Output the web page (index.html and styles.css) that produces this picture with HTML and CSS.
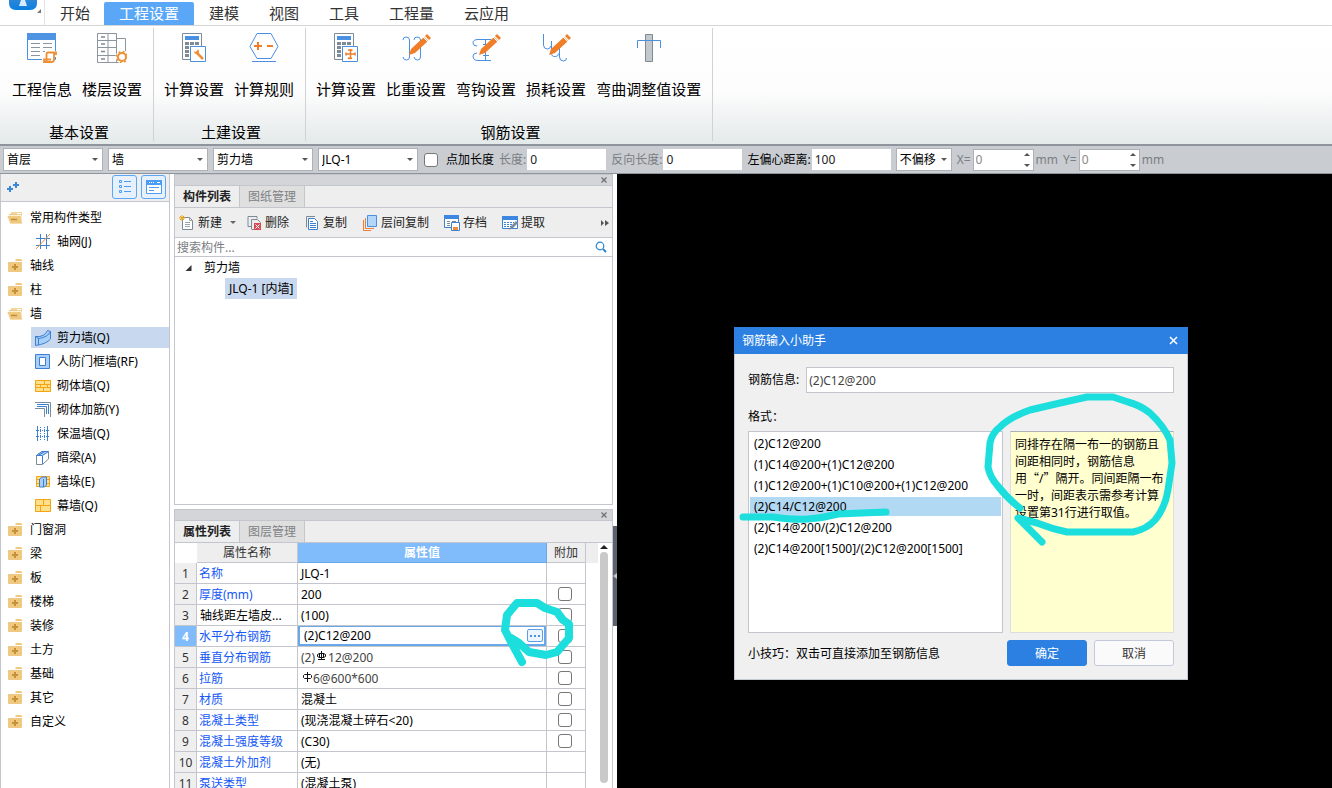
FILE: index.html
```html
<!DOCTYPE html>
<html lang="zh-CN">
<head>
<meta charset="utf-8">
<title>工程设置</title>
<link rel="stylesheet" href="styles.css">
</head>
<body>
<svg class="defs" aria-hidden="true">
  <symbol id="closed" viewBox="0 0 16 14"><path d="M1 3h14v9a1 1 0 0 1-1 1H2a1 1 0 0 1-1-1z" fill="#efc980"/><path d="M9 0h5l1 1v1H8z" fill="#efc980"/><path d="M8 5v6M5 8h6" stroke="#c4913a" stroke-width="2"/></symbol>
  <symbol id="open" viewBox="0 0 16 14"><path d="M4 1h11v11H4z" fill="#f3d59b"/><path d="M2 3h8v3H2z" fill="#efc980"/><path d="M10 2.500h4" stroke="#fff"/><path d="M0 4.500h14l1.500 8.500H3z" fill="#efc980" stroke="#fff" stroke-width=".7"/><path d="M4 8.500h6" stroke="#bd8a36" stroke-width="1.500"/></symbol>
  <symbol id="calc" viewBox="0 0 30 30"><path d="M3.500.5h19v26h-19z" fill="#fff" stroke="#7d8b96"/><path d="M6 3h14v4H6z" fill="#4a90e2"/><path d="M6 9h4v3H6zm5 0h4v3h-4zm5 0h4v3h-4zM6 13h4v3H6zm5 0h4v3h-4zM6 17h4v3H6zm0 4h4v3H6z" fill="#7d8b96"/><path d="M11.500 13.500h15v15h-15z" fill="#fff" stroke="#4a90e2"/></symbol>
  <symbol id="pencil" viewBox="0 0 30 30"><path d="m8 22 2-6L23 4l4 4L14 20z" fill="#f07d28"/><path d="m24 3 2-2 4 4-2 2z" fill="#f07d28"/><path d="m22 4 5 5" stroke="#fff"/></symbol>
</svg>

<div class="app">
  <header class="tabs">
    <div class="brand"><svg width="28" height="11" viewBox="0 0 28 11"><defs><linearGradient id="lg" y2="1" x2="0"><stop stop-color="#2d86d8"/><stop offset="1" stop-color="#087fdf"/></linearGradient></defs><path d="M0 0h28v3q0 7-7 7H7Q0 10 0 3z" fill="url(#lg)"/><path d="M12 0h4l2 6h-8z" fill="#d8ecff"/></svg><i class="corner"></i></div>
    <nav class="tablist">
      <button>开始</button><button class="on">工程设置</button><button>建模</button><button>视图</button><button>工具</button><button>工程量</button><button>云应用</button>
    </nav>
  </header>

  <section class="ribbon">
    <div class="group first">
      <div class="tools">
        <button><svg width="30" height="30" viewBox="0 0 30 30"><path d="M.5.5h28v26H.5z" fill="#fff" stroke="#4a90e2"/><path d="M0 0h29v7H0z" fill="#4f94e3"/><path d="M4 10.500h9m3 0h9M4 14.500h9m3 0h9M4 18.500h9m3 0h3M4 22.500h9" stroke="#8b959d"/><path d="M15 30v-5h3v-7h12v6h-3v6z" fill="#fff"/><path d="M19.500 28V21q0-1.500 1.500-1.500h8v2.500M27 20v6.500q0 2.500-2.500 2.500H17v-2.500h7" fill="none" stroke="#ee8f35" stroke-width="1.800"/></svg>工程信息</button>
        <button><svg width="30" height="30" viewBox="0 0 30 30"><path d="M.5.5h19v29H.5zM.5 7.500h19M.5 14.500h19M.5 22.500h19M11 .5v29M20 5.500h8.500V18M22 29.500h-4" fill="none" stroke="#8b959d"/><path d="M4 4h4M4 11h4M4 18.500h4M4 26h4" stroke="#7d8b96" stroke-width="1.500"/><circle cx="25" cy="24" r="6.500" fill="#fff"/><circle cx="25" cy="24" r="4" fill="none" stroke="#ee8f35" stroke-width="2"/><circle cx="25" cy="24" r="5.500" fill="none" stroke="#ee8f35" stroke-width="1.500" stroke-dasharray="2 2.320"/></svg>楼层设置</button>
      </div>
      <h2>基本设置</h2>
    </div>
    <div class="group">
      <div class="tools">
        <button><svg width="30" height="30" viewBox="0 0 30 30"><use href="#calc"/><path d="m17 19 7 7" stroke="#ee8f35" stroke-width="2.500"/><path d="M15 17.500q0 4 4 3.500 2-2 0-5l-1 2-2 1z" fill="#ee8f35"/></svg>计算设置</button>
        <button><svg width="30" height="30" viewBox="0 0 30 30"><path d="M8 .5h14l7 13-7 12H8l-7-12z" fill="#fff" stroke="#4a90e2"/><path d="M3 28.500h24" stroke="#4a90e2"/><path d="M5 13h8M9 9v8M18 13h6" stroke="#f07d28" stroke-width="2"/></svg>计算规则</button>
      </div>
      <h2>土建设置</h2>
    </div>
    <div class="group">
      <div class="tools">
        <button><svg width="30" height="30" viewBox="0 0 30 30"><use href="#calc"/><path d="M19.500 16v9M15 21h9M15 19.500v3M24 19.500v3M17 17.500q2-1.500 4.500 0M17 25q2 1 4 0" fill="none" stroke="#f07d28" stroke-width="1.500"/></svg>计算设置</button>
        <button><svg width="30" height="30" viewBox="0 0 30 30"><path d="M2 7q0-3 3-3 3.500 0 3.500 3v17q0 3-3 3T2 24M13 7q0-3 3-3 3.500 0 3.500 3v17q0 3-3 3T13 24" fill="none" stroke="#4a90e2"/><use href="#pencil"/></svg>比重设置</button>
        <button><svg width="30" height="30" viewBox="0 0 30 30"><path d="M6 13q-4 0-4-3 0-3.500 5-3.500h13M6 20q-4 0-4 3 0 4.500 5 4.500h13M14.500 7v20M12 11.500h6M12 22.500h6" fill="none" stroke="#4a90e2"/><use href="#pencil"/></svg>弯钩设置</button>
        <button><svg width="30" height="30" viewBox="0 0 30 30"><path d="M2.500 1v11q0 4 4 4 3 0 3-3M10.500 8v12q0 4 4 3.500 3 0 3-3M18.500 15v9q0 4 4 4 3 0 3-3" fill="none" stroke="#4a90e2"/><use href="#pencil"/></svg>损耗设置</button>
        <button><svg width="30" height="30" viewBox="0 0 30 30"><path d="M11.500 1.500h7v27h-7z" fill="#c3c8cc" stroke="#7d8b96"/><path d="M3.500 15V7.500h23V15" fill="none" stroke="#4a90e2"/></svg>弯曲调整值设置</button>
      </div>
      <h2>钢筋设置</h2>
    </div>
  </section>

  <section class="options">
    <span class="pick"><select aria-label="楼层"><option>首层</option></select></span>
    <span class="pick"><select aria-label="构件类别"><option>墙</option></select></span>
    <span class="pick"><select aria-label="构件类型"><option>剪力墙</option></select></span>
    <span class="pick"><select aria-label="构件"><option>JLQ-1</option></select></span>
    <label class="tick"><input type="checkbox" class="box">点加长度</label>
    <label class="field dim">长度:<input type="text" value="0"></label>
    <label class="field dim">反向长度:<input type="text" value="0"></label>
    <label class="field">左偏心距离:<input type="text" value="100"></label>
    <span class="pick small"><select aria-label="偏移"><option>不偏移</option></select></span>
    <label class="spin dim">X=<span><input type="text" value="0"></span>mm</label>
    <label class="spin dim">Y=<span><input type="text" value="0"></span>mm</label>
  </section>

  <main class="work">
    <aside class="nav">
      <div class="navbar">
        <button class="plain" aria-label="添加"><svg width="14" height="14" viewBox="0 0 14 14"><path d="M0 9h6M3 6v6M6 5h6M9 2v6" stroke="#3d87d8" stroke-width="2"/></svg></button>
        <button class="mode" aria-label="列表"><svg width="14" height="14" viewBox="0 0 14 14"><path d="M1.500.5h2v2h-2zm0 5h2v2h-2zm0 5h2v2h-2zM6 1.500h7M6 6.500h7M6 11.500h7" fill="none" stroke="#4a9df5"/></svg></button>
        <button class="mode" aria-label="窗口"><svg width="16" height="14" viewBox="0 0 16 14"><path d="M.5.5h15v13H.5z" fill="#fff" stroke="#4a9df5"/><path d="M0 0h16v5H0z" fill="#4a9df5"/><path d="M3 2.500h1m1 0h1m1 0h1m3 0h3" stroke="#fff"/><path d="M3 7.500h10M3 10.500h5" stroke="#4a9df5"/></svg></button>
      </div>
      <ul class="tree">
        <li><svg width="16" height="14"><use href="#open"/></svg>常用构件类型</li>
        <li class="sub"><svg width="16" height="16" viewBox="0 0 16 16"><path d="M5.500 0v15M11.500 0v15M1 4.500h14M1 11.500h14" stroke="#3d7fd0"/><path d="M1 15 15 0" stroke="#ee8f35"/></svg>轴网(J)</li>
        <li><svg width="16" height="14"><use href="#closed"/></svg>轴线</li>
        <li><svg width="16" height="14"><use href="#closed"/></svg>柱</li>
        <li><svg width="16" height="14"><use href="#open"/></svg>墙</li>
        <li class="sub on"><svg width="16" height="16" viewBox="0 0 16 16"><path d="M.5 6.500q9 1 12-6l3 1V9q-4 5-15 6.500z" fill="#a8cffa" stroke="#3d7fd0"/><path d="M.5 6.500l3 2q9-1 12-7M3.500 8.500V15" fill="none" stroke="#3d7fd0"/></svg>剪力墙(Q)</li>
        <li class="sub"><svg width="16" height="16" viewBox="0 0 16 16"><path d="M.5.5h14v14H.5z" fill="#a8cffa" stroke="#3d7fd0"/><path d="M4.500 3.500h6v8h-6z" fill="#fff" stroke="#3d7fd0"/></svg>人防门框墙(RF)</li>
        <li class="sub"><svg width="16" height="16" viewBox="0 0 16 16"><path d="M.5 2.500h15v11H.5zM0 6.500h16M0 9.500h16M9.500 2v4M5.500 6v4M12.500 6v4M8.500 10v4" fill="#ffe08a" stroke="#f2a414"/></svg>砌体墙(Q)</li>
        <li class="sub"><svg width="16" height="16" viewBox="0 0 16 16"><path d="M0 .5h15.500V15M0 6.500h9.500V15" fill="none" stroke="#7d8b96"/><path d="M2 2.500h11.500V12M2 4.500h9.500V12" fill="none" stroke="#3d7fd0"/></svg>砌体加筋(Y)</li>
        <li class="sub"><svg width="16" height="16" viewBox="0 0 16 16"><path d="M2.500 0v15M12.500 0v15" stroke="#3d7fd0"/><path d="M5.500 1v14M9.500 1v14M1 4.500h14M1 10.500h14" stroke="#3d7fd0" stroke-dasharray="1 1"/></svg>保温墙(Q)</li>
        <li class="sub"><svg width="16" height="16" viewBox="0 0 16 16"><path d="M1.500 5.500 7 1.500h6.500V9l-6 5.500h-6z" fill="#fff" stroke="#7d8b96"/><path d="M1.500 5.500 7 1.500h6.500l-6 4zM4 5l5-3M7.500 6v8" fill="#a8cffa" stroke="#3d7fd0"/></svg>暗梁(A)</li>
        <li class="sub"><svg width="16" height="16" viewBox="0 0 16 16"><path d="M1.500 2.500h13v10h-13zM1 5.500h14M1 9.500h14" fill="#ffe08a" stroke="#f2a414"/><path d="m4.500 5 3-2h4v8l-2 2h-5z" fill="#a8cffa" stroke="#3d7fd0"/><path d="M8.500 5v8" stroke="#3d7fd0"/></svg>墙垛(E)</li>
        <li class="sub"><svg width="16" height="16" viewBox="0 0 16 16"><path d="M.5 1.500h15v12H.5zM0 7.500h16M8.500 1v6M5.500 7v6" fill="#ffe08a" stroke="#f2a414"/></svg>幕墙(Q)</li>
        <li><svg width="16" height="14"><use href="#closed"/></svg>门窗洞</li>
        <li><svg width="16" height="14"><use href="#closed"/></svg>梁</li>
        <li><svg width="16" height="14"><use href="#closed"/></svg>板</li>
        <li><svg width="16" height="14"><use href="#closed"/></svg>楼梯</li>
        <li><svg width="16" height="14"><use href="#closed"/></svg>装修</li>
        <li><svg width="16" height="14"><use href="#closed"/></svg>土方</li>
        <li><svg width="16" height="14"><use href="#closed"/></svg>基础</li>
        <li><svg width="16" height="14"><use href="#closed"/></svg>其它</li>
        <li><svg width="16" height="14"><use href="#closed"/></svg>自定义</li>
      </ul>
    </aside>

    <div class="docks">
      <section class="panel">
        <div class="strip"><button class="plain" aria-label="关闭"><svg width="6" height="6" viewBox="0 0 6 6"><path d="m.5.5 5 5m0-5-5 5" stroke="#6d7175" stroke-width="1.300"/></svg></button></div>
        <div class="ptabs"><button class="on">构件列表</button><button>图纸管理</button></div>
        <div class="bar">
          <button class="new"><svg width="16" height="16" viewBox="0 0 16 16"><path d="M3.500 2.500h7l3 3v9h-10z" fill="#fff" stroke="#7d8b96"/><path d="M10.500 2.500v3h3M6 7.500h5M6 9.500h5M6 11.500h5" fill="none" stroke="#9ba5ad"/><path d="M3 0v6M0 3h6M1 1l4 4M5 1 1 5" stroke="#f2a414"/></svg>新建<i class="caret"></i></button>
          <button><svg width="16" height="16" viewBox="0 0 16 16"><path d="M11 3.500V1.500h-9v10h3M5.500 14.500h3M5.500 14V4.500h6l3 3V8" fill="none" stroke="#7d8b96"/><path d="M8 8h7v7H8z" fill="#d6494f"/><path d="m9.500 9.500 4 4m0-4-4 4" stroke="#fff"/></svg>删除</button>
          <button><svg width="16" height="16" viewBox="0 0 16 16"><path d="M11 1.500H2.500v11" fill="none" stroke="#7d8b96"/><path d="M4.500 3.500h6l3 3v8h-9z" fill="#fff" stroke="#3d7fd0"/><path d="M6 6.500h3M6 8.500h6M6 10.500h6M6 12.500h6" stroke="#3d7fd0"/></svg>复制</button>
          <button><svg width="16" height="16" viewBox="0 0 16 16"><path d="M5.500.5h9v11h-9z" fill="#b4d6fb" stroke="#4a90e2"/><path d="M3.500 3v10.500H12M1.500 5v10.500H9" fill="none" stroke="#ee7d35"/></svg>层间复制</button>
          <button><svg width="16" height="16" viewBox="0 0 16 16"><path d="M.5.5h14v12H.5z" fill="#fff" stroke="#3d7fd0"/><path d="M0 0h15v4H0z" fill="#3d87e0"/><path d="M3 6.500h3m2 0h4M3 8.500h3M3 10.500h3" stroke="#7d8b96"/><path d="M7.500 7.500h8v8h-8z" fill="#fff" stroke="#3d7fd0"/><path d="M9 12h5v3H9z" fill="#ee8f35"/></svg>存档</button>
          <button><svg width="16" height="16" viewBox="0 0 16 16"><path d="M.5 1.500h15v12H.5z" fill="#fff" stroke="#3d7fd0"/><path d="M0 1h16v4H0z" fill="#3d87e0"/><path d="M2 7.500h10M2 9.500h8M2 11.500h7" stroke="#3d7fd0" stroke-dasharray="2 1"/><path d="m7 15 2-4 5-5 2 2-5 5z" fill="#7d8b96"/></svg>提取</button>
          <span class="more"><svg width="8" height="6" viewBox="0 0 8 6"><path d="M0 0v6l3-3zm4 0v6l4-3z" fill="#555"/></svg></span>
        </div>
        <div class="search"><input type="text" placeholder="搜索构件..." aria-label="搜索构件"><svg width="12" height="12" viewBox="0 0 12 12"><circle cx="5" cy="5" r="3.800" fill="none" stroke="#2f86cf" stroke-width="1.200"/><path d="m8 8 3 3" stroke="#2f86cf" stroke-width="2"/></svg></div>
        <ul class="items"><li><svg width="7" height="6" viewBox="0 0 7 6"><path d="M6.500 0v6h-6z" fill="#333"/></svg>剪力墙</li><li class="leaf"><span>JLQ-1 [内墙]</span></li></ul>
      </section>

      <section class="panel">
        <div class="strip"><button class="plain" aria-label="关闭"><svg width="6" height="6" viewBox="0 0 6 6"><path d="m.5.5 5 5m0-5-5 5" stroke="#6d7175" stroke-width="1.300"/></svg></button></div>
        <div class="ptabs"><button class="on">属性列表</button><button>图层管理</button></div>
        <div class="gridwrap">
          <div class="sheet">
          <table>
            <colgroup><col class="c1"><col class="c2"><col><col class="c4"></colgroup>
            <thead><tr><th class="blank"></th><th>属性名称</th><th class="on">属性值</th><th>附加</th></tr></thead>
            <tbody>
              <tr><th>1</th><td class="k">名称</td><td>JLQ-1</td><td></td></tr>
              <tr><th>2</th><td class="k">厚度(mm)</td><td>200</td><td class="c"><input type="checkbox" class="box" aria-label="附加 2"></td></tr>
              <tr><th>3</th><td>轴线距左墙皮...</td><td>(100)</td><td class="c"><input type="checkbox" class="box" aria-label="附加 3"></td></tr>
              <tr class="cur"><th>4</th><td class="k">水平分布钢筋</td><td class="edit"><div><input type="text" value="(2)C12@200" aria-label="水平分布钢筋"><button aria-label="更多"><svg width="12" height="4" viewBox="0 0 12 4"><path d="M1 1h2v2H1zm4 0h2v2H5zm4 0h2v2H9z" fill="#4a90e2"/></svg></button></div></td><td class="c"><input type="checkbox" class="box" aria-label="附加 4"></td></tr>
              <tr><th>5</th><td class="k">垂直分布钢筋</td><td class="soft">(2)<svg class="bar-mark" width="13" height="11" viewBox="0 0 13 11"><path d="M4.500 2.500h4l2 1v2l-2 1h-4l-2-1v-2zM6.500 0v9M4.500 2v5M8.500 2v5M3 8.500h7" fill="none" stroke="#111"/></svg>12@200</td><td class="c"><input type="checkbox" class="box" aria-label="附加 5"></td></tr>
              <tr><th>6</th><td class="k">拉筋</td><td class="soft"><svg class="bar-mark" width="12" height="11" viewBox="0 0 12 11"><path d="M3.500 2.500h6l1 1v2l-1 1h-6l-1-1v-2zM6.500 0v10" fill="none" stroke="#111"/></svg>6@600*600</td><td class="c"><input type="checkbox" class="box" aria-label="附加 6"></td></tr>
              <tr><th>7</th><td class="k">材质</td><td>混凝土</td><td class="c"><input type="checkbox" class="box" aria-label="附加 7"></td></tr>
              <tr><th>8</th><td class="k">混凝土类型</td><td>(现浇混凝土碎石&lt;20)</td><td class="c"><input type="checkbox" class="box" aria-label="附加 8"></td></tr>
              <tr><th>9</th><td class="k">混凝土强度等级</td><td>(C30)</td><td class="c"><input type="checkbox" class="box" aria-label="附加 9"></td></tr>
              <tr><th>10</th><td class="k">混凝土外加剂</td><td>(无)</td><td></td></tr>
              <tr><th>11</th><td class="k">泵送类型</td><td>(混凝土泵)</td><td></td></tr>
            </tbody>
          </table>
          </div>
          <div class="scroll"><i></i><b></b></div>
        </div>
        <svg class="ink" width="439" height="279" viewBox="174 509 439 279"><path d="M522 662 510 640l-5-10 2-15 10-12h20l8 5 12 4 6 8 6 4v14l-12 14-11 3-17-3-10-9-8-5"/></svg>
      </section>
    </div>

    <div class="splitter"><button aria-label="收起"><svg width="4" height="6" viewBox="0 0 4 6"><path d="M4 0v6L0 3z" fill="#c3c8cc"/></svg></button></div>

    <section class="canvas">
      <form class="dialog" role="dialog" aria-label="钢筋输入小助手">
        <div class="dtitle">钢筋输入小助手<button type="button" class="plain" aria-label="关闭"><svg width="9" height="9" viewBox="0 0 9 9"><path d="m1 1 7 7m0-7L1 8" stroke="#fff" stroke-width="1.500"/></svg></button></div>
        <div class="dbody">
          <label class="info">钢筋信息:<input type="text" value="(2)C12@200"></label>
          <p class="fmt">格式<span class="mid">：</span></p>
          <div class="cols">
            <ul class="formats"><li>(2)C12@200</li><li>(1)C14@200+(1)C12@200</li><li>(1)C12@200+(1)C10@200+(1)C12@200</li><li class="on">(2)C14/C12@200</li><li>(2)C14@200/(2)C12@200</li><li>(2)C14@200[1500]/(2)C12@200[1500]</li></ul>
            <p class="note">同排存在隔一布一的钢筋且<br>间距相同时<span class="mid">，</span>钢筋信息<br>用<span class="cjk">“</span>/<span class="cjk">”</span>隔开。同间距隔一布<br>一时<span class="mid">，</span>间距表示需参考计算<br>设置第31行进行取值。</p>
          </div>
          <div class="foot"><span class="tip">小技巧<span class="mid">：</span>双击可直接添加至钢筋信息</span><button type="button" class="ok">确定</button><button type="button">取消</button></div>
        </div>
        <svg class="ink" width="454" height="353" viewBox="734 327 454 353"><path d="M743 517h30q20 3 35 2 15-1 30-5l48-2"/><path d="m1042 542-24-24 19 5q15 6 30 9h66q14-3 22-12 10-12 13-30l4-27-2-23q-6-14-20-27-10-8-22-11l-15-5h-26l-27 6-30 7q-20 7-30 17-8 6-10 16l-2 24q2 10 9 18 10 13 23 23"/></svg>
      </form>
    </section>
  </main>
</div>
</body>
</html>
```
FILE: styles.css
```css
* { box-sizing: border-box; }
body { margin: 0; font: 12px/18px "Noto Sans", "Noto Sans CJK SC", sans-serif; color: #000; background: #fff; }
button, input, select { font: inherit; color: inherit; margin: 0; }
button { border: 0; background: none; padding: 0; white-space: nowrap; }
ul { list-style: none; margin: 0; padding: 0; }
p, h2 { margin: 0; }
svg { display: block; flex: none; }
.defs { position: absolute; width: 0; height: 0; }
.app { height: 100vh; display: flex; flex-direction: column; overflow: hidden; }

.tabs { display: flex; height: 26px; border-bottom: 1px solid #d5d6d8; flex: none; }
.brand { width: 44px; padding-left: 9px; display: flex; }
.corner { align-self: flex-start; margin-top: 9px; border-left: 4px solid transparent; border-bottom: 4px solid #777; }
.tablist { display: flex; align-items: stretch; padding-top: 2px; border-left: 1px solid #e4e4e4; }
.tablist button { padding: 0 15px; font-size: 15px; color: #333; line-height: 23px; }
.tablist button:first-child { padding-right: 14px; }
.tablist .on { background: #5aa7f8; color: #fff; border-radius: 2px 2px 0 0; }

.ribbon { display: flex; flex: none; height: 118px; background: linear-gradient(#fff 0%, #fdfdfd 55%, #e4e9ea 100%); padding: 2px 0 3px; }
.group { display: flex; flex-direction: column; justify-content: space-between; padding: 5px 11px 0 10px; border-right: 1px solid #cfd3d5; }
.group.first { padding-left: 12px; }
.tools { display: flex; gap: 10px; }
.tools button { display: flex; flex-direction: column; align-items: center; gap: 15px; font-size: 15px; line-height: 22px; }
.group h2 { padding-left: 4px; font-size: 15px; line-height: 18px; font-weight: 400; text-align: center; }

.options { display: flex; align-items: center; gap: 5px; flex: none; height: 30px; padding: 0 3px; background: #c9ccd1; border-top: 2px solid #8e959c; border-bottom: 1px solid #8e959c; white-space: nowrap; }
.pick { position: relative; width: 100px; }
.pick.small { width: 56px; }
.pick select { width: 100%; height: 23px; padding: 0 3px; appearance: none; background: #fff; border: 1px solid #aeb1b5; border-radius: 0; display: block; }
.pick::after { content: ""; position: absolute; right: 5px; top: 10px; border: 3px solid transparent; border-top-color: #555; pointer-events: none; }
.box { appearance: none; width: 14px; height: 14px; border: 1px solid #777; border-radius: 3px; background: #fff; display: block; }
.tick { display: flex; align-items: center; gap: 8px; padding-left: 1px; }
.field { display: flex; align-items: center; gap: 1px; }
.field input { width: 79px; height: 21px; border: 0; padding: 0 3px; color: #222; }
.dim { color: #7b7e82; }
.spin { display: flex; align-items: center; gap: 2px; }
.spin span { position: relative; width: 61px; }
.spin input { width: 100%; height: 22px; border: 1px solid #aeb1b5; padding: 0 2px; color: #888; background: #fff; display: block; }
.spin span::before, .spin span::after { content: ""; position: absolute; right: 4px; border: 3px solid transparent; }
.spin span::before { top: 1px; border-bottom-color: #555; }
.spin span::after { bottom: 1px; border-top-color: #555; }

.work { flex: 1; min-height: 0; display: flex; }
.nav { width: 170px; flex: none; border: solid #c3c6cc; border-width: 0 1px; margin-right: 4px; overflow: hidden; }
.navbar { display: flex; gap: 4px; align-items: center; height: 28px; padding: 0 3px 2px 6px; background: #efefef; border-bottom: 1px solid #c3c6cc; }
.navbar .plain { margin-right: auto; }
.mode { width: 25px; height: 24px; display: grid; place-items: center; border: 1px solid #5aa7f8; border-radius: 3px; background: #e6f1fd; }
.tree { display: flex; flex-direction: column; padding-top: 3px; }
.tree li { display: flex; align-items: center; gap: 7px; height: 24px; flex: none; padding: 2px 0 0 6px; }
.tree .sub { gap: 6px; height: 21px; margin: 2px 0 1px 30px; padding: 1px 0 0 4px; }
.tree .on { background: #c8d9ef; }

.docks { width: 439px; flex: none; display: grid; grid-template-rows: minmax(0, 331fr) minmax(0, 279fr); gap: 4px; }
.panel { border: 1px solid #c3c6cc; display: flex; flex-direction: column; min-height: 0; position: relative; }
.panel:last-child { border-bottom: 0; }
.strip { height: 11px; flex: none; display: flex; justify-content: flex-end; align-items: center; padding-right: 5px; background: #d4d5d9; border-bottom: 1px solid #c3c6cc; }
.ptabs { display: flex; flex: none; height: 22px; background: #eee; border-bottom: 1px solid #c3c6cc; }
.ptabs button { padding: 0 7px; width: 65px; border-right: 1px solid #c3c6cc; background: #dfdfe0; color: #808285; }
.ptabs .on { background: #eee; color: #222; font-weight: 700; }
.bar { display: flex; align-items: center; flex: none; height: 30px; padding: 0 3px 0 4px; background: #eee; border-bottom: 1px solid #c3c6cc; color: #222; }
.bar button { display: flex; align-items: center; gap: 3px; margin-right: 15px; }
.bar .new { margin-right: 10px; }
.caret { margin: 3px 0 0 5px; border: 3px solid transparent; border-top-color: #666; }
.more { margin-left: auto; }
.search { display: flex; align-items: center; flex: none; height: 19px; padding-right: 5px; border-bottom: 1px solid #c3c6cc; }
.search input { flex: 1; min-width: 0; border: 0; padding: 1px 2px 0; height: 18px; outline: 0; }
.search input::placeholder { color: #7b7e82; }
.items li { display: flex; align-items: center; gap: 12px; height: 21px; padding-left: 10px; }
.items .leaf { padding-left: 50px; }
.leaf span { background: #c8d9ef; padding: 0 4px; line-height: 21px; }

.gridwrap { flex: 1; min-height: 0; display: flex; overflow: hidden; }
.sheet { flex: 1; padding-right: 12px; background: linear-gradient(#eee 20px, #fff 20px); }
table { border-collapse: separate; border-spacing: 0; table-layout: fixed; width: 100%; }
.c1 { width: 22px; }
.c2 { width: 101px; }
.c4 { width: 39px; }
th, td { height: 21px; padding: 2px 0 0; border: solid #c3c6cc; border-width: 0 1px 1px 0; line-height: 18px; white-space: nowrap; overflow: hidden; }
thead th { height: 20px; padding-top: 1px; background: #eee; font-weight: 400; color: #333; }
thead .blank { background: #fff; border: 0; }
thead .on { background: #80bbfb; color: #fff; font-weight: 700; border-color: #67a7ea; }
tbody th { background: #efefef; font-weight: 400; color: #333; text-align: center; }
td { background: #fff; padding-left: 3px; }
td.k { color: #1458f5; padding-left: 2px; }
td.soft { color: #444; }
td.c { padding: 0 0 0 11px; }
.cur th { background: #80bbfb; color: #fff; font-weight: 700; }
td.edit { padding: 0; }
.edit div { display: flex; align-items: center; height: 20px; border: 2px solid #67a7ea; border-width: 1px 2px 2px; padding-right: 1px; }
.edit input { flex: 1; min-width: 0; height: 17px; border: 0; padding: 1px 4px 0; }
.edit button { width: 16px; height: 13px; display: grid; place-items: center; border: 1px solid #5a9fe6; border-radius: 2px; background: #edf5fe; }
.bar-mark { display: inline-block; vertical-align: 0; margin: 0 1px; }
.soft .bar-mark:first-child { margin: 0; }
.scroll { width: 14px; padding: 2px 3px 5px 1px; display: flex; flex-direction: column; align-items: center; gap: 3px; }
.scroll i { border: 4px solid transparent; border-top: 0; border-bottom-color: #222; }
.scroll b { flex: 1; width: 8px; border-radius: 4px; background: #c9c9c9; }
.splitter { width: 4px; flex: none; padding-top: 352px; }
.splitter button { width: 4px; height: 100px; display: grid; place-items: center; background: #5c626d; }

.canvas { flex: 1; min-width: 0; background: #000; position: relative; }
.dialog { position: absolute; left: 117px; top: 153px; width: 454px; background: #f0f0f0; }
.dtitle { display: flex; align-items: center; justify-content: space-between; height: 27px; padding: 0 10px 0 8px; background: #2c80e2; color: #fff; }
.dbody { padding: 13px; border: 1px solid #c3c9d4; border-top: 0; }
.info { display: flex; align-items: center; justify-content: space-between; gap: 7px; }
.info input { flex: 1; min-width: 0; height: 26px; border: 1px solid #c3c6cc; padding: 0 2px; color: #444; background: #fff; }
.fmt { padding: 15px 0 5px; }
.cols { display: grid; grid-template-columns: 255fr 164fr; gap: 7px; min-height: 202px; }
.formats { background: #fff; border: 1px solid #c3c6cc; padding: 1px; }
.formats li { line-height: 19px; padding: 0 4px; margin: 1px 0 2px; white-space: nowrap; }
.formats .on { background: #b2d9f4; }
.note { background: #ffffcf; border: 1px solid #dcdfdc; border-top-color: #aeb1b5; padding: 4px; line-height: 17px; white-space: nowrap; }
.cjk { font-family: "Noto Sans CJK SC", sans-serif; line-height: 1; }
.mid { font-family: "Noto Sans CJK TC", sans-serif; line-height: 1; }
.foot { display: flex; align-items: center; gap: 7px; margin-top: 7px; }
.tip { margin-right: auto; padding-top: 2px; }
.foot button { width: 80px; height: 26px; padding-top: 1px; border: 1px solid #c3c9d8; border-radius: 3px; background: #fafafa; color: #333; }
.foot .ok { background: #2c80e2; border-color: #2c80e2; color: #fff; }
.ink { position: absolute; left: -1px; top: -1px; overflow: visible; pointer-events: none; fill: none; stroke: #1bdedd; stroke-width: 8; stroke-linecap: round; stroke-linejoin: round; }
.dialog .ink { left: 0; top: 0; stroke-width: 7; }
```
